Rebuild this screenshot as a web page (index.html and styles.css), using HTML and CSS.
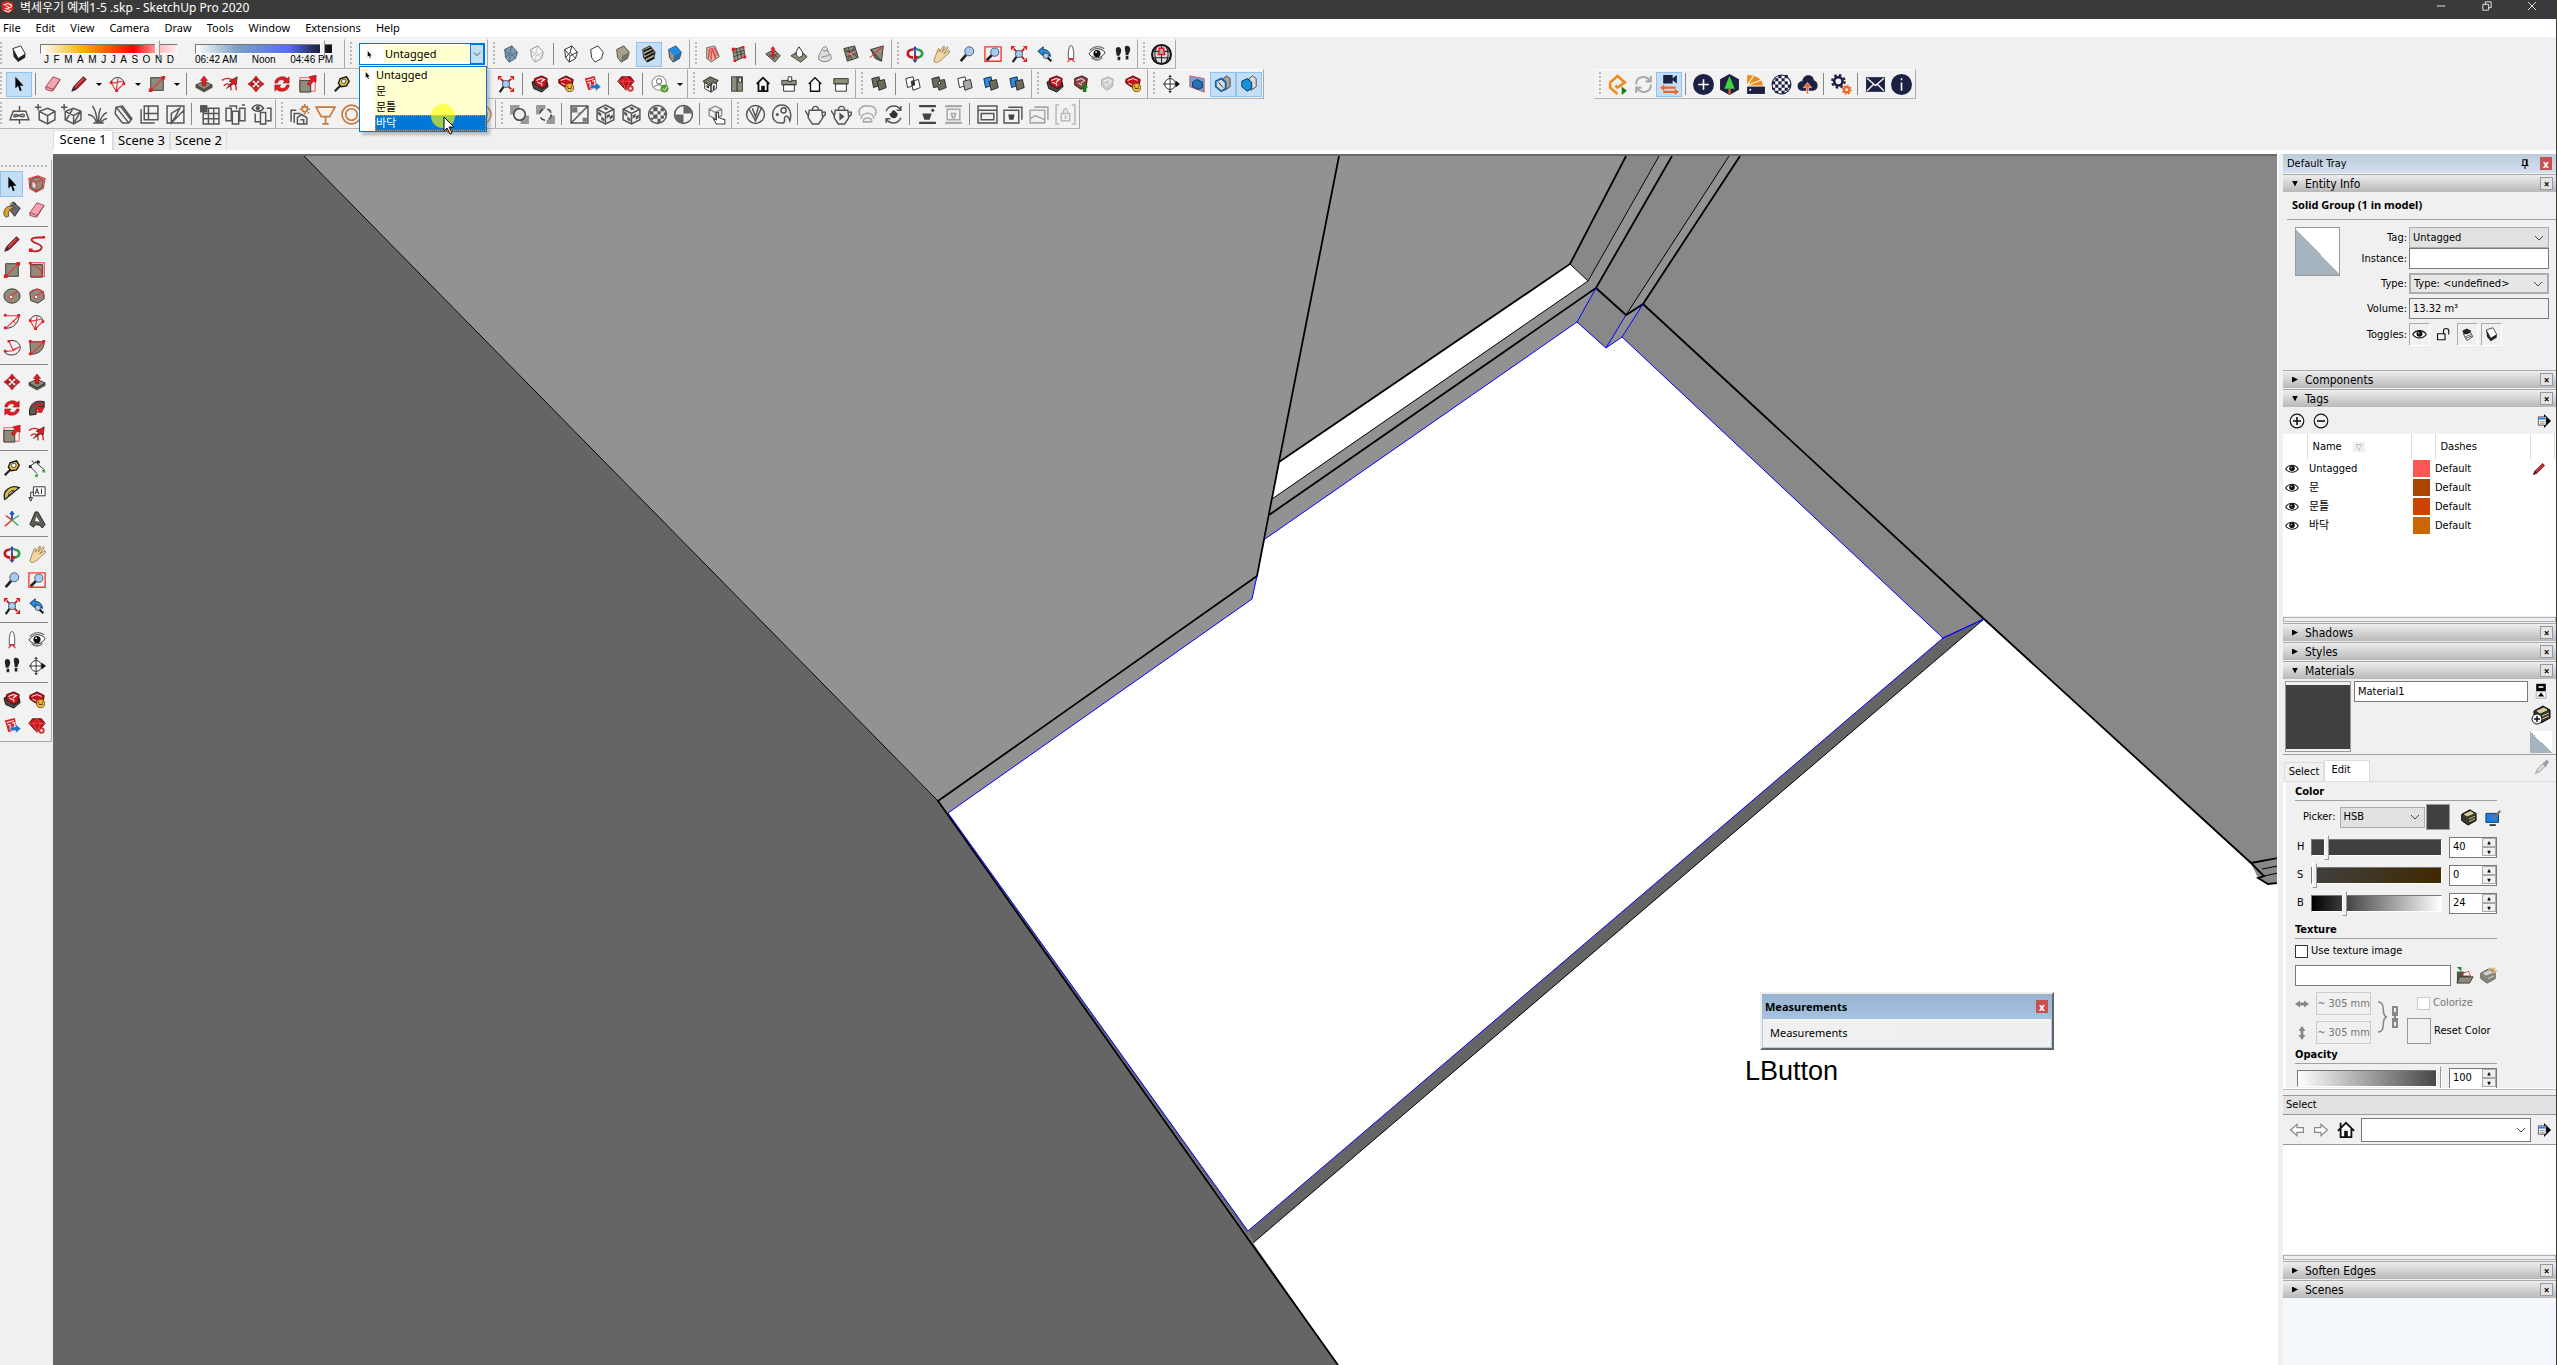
FILE: index.html
```html
<!DOCTYPE html>
<html lang="en">
<head>
<meta charset="utf-8">
<title>벽세우기 예제1-5 .skp - SketchUp Pro 2020</title>
<link rel="stylesheet" href="styles.css">
</head>
<body>
<svg class="defs" aria-hidden="true"><defs>
<symbol id="logo" viewBox="0 0 20 20"><path d="M2 4 11 1l8 4v9l-7 5-9-4z" fill="#e2231a"/><path d="M5 7l6-2 5 2v3l-5 2M8 8l4 2v3l-5-1M6 15l6 2 4-3" fill="none" stroke="#fff" stroke-width="1.5"/></symbol>
<symbol id="shadow" viewBox="0 0 20 20"><path class="w" d="M3 4l9-3 5 9-8 5z"/><path d="M3 4l6 11 8-5v4l-8 5-5-6z" fill="#222"/></symbol>
<symbol id="xray" viewBox="0 0 20 20"><path d="M3 5l8-4 6 7-2 7-7 4-4-5z" fill="#7d9db3" stroke="#3d5668"/><path d="M3 5l6 7 8-4M9 12l-1 7M11 1L9 8l-5 6M9 8l6 7" fill="none" stroke="#3d5668" stroke-width=".7"/></symbol>
<symbol id="backedge" viewBox="0 0 20 20"><path d="M3 5l8-4 6 7-2 7-7 4-4-5z" fill="#f8f8f8" stroke="#888"/><path d="M3 5l6 7 8-4M9 12l-1 7M11 1L9 8l-5 6M9 8l6 7" fill="none" stroke="#bbb"/></symbol>
<symbol id="wire" viewBox="0 0 20 20"><path class="w" d="M3 5l8-4 6 7-2 7-7 4-4-5z"/><path class="l" d="M3 5l6 7 8-4M9 12l-1 7M11 1L9 8l-5 6M9 8l6 7"/></symbol>
<symbol id="hidden" viewBox="0 0 20 20"><path class="w" d="M3 5l8-4 6 7-2 7-7 4-4-5z"/></symbol>
<symbol id="shaded" viewBox="0 0 20 20"><path d="M3 5l8-4 6 7-2 7-7 4-4-5z" fill="#a5a28c" stroke="#444"/><path d="M9 12l8-4-2 7-7 4z" fill="#77745f"/></symbol>
<symbol id="texture" viewBox="0 0 20 20"><path d="M3 5l8-4 6 7-2 7-7 4-4-5z" fill="#a5a28c" stroke="#222"/><path d="M4 7l9-4M5 11l10-5M5 15l11-6M8 18l8-4" stroke="#111" stroke-width="2"/></symbol>
<symbol id="mono" viewBox="0 0 20 20"><path d="M3 5l8-4 6 7-2 7-7 4-4-5z" fill="#97947f" stroke="#333"/><path d="M3 5l8-4 6 7-8 4z" fill="#1c8be0"/><path d="M9 12l8-4-2 7-7 4z" fill="#2d6a9e"/></symbol>
<symbol id="contour" viewBox="0 0 20 20"><path d="M3 3l9-2 5 12-9 6-5-4z" fill="#d8b8a4" stroke="#666"/><path class="r" d="M5 15l1-10 3-1 4 9M8 17L8 7l2 0 3 8M11 3l5 9"/></symbol>
<symbol id="scratch" viewBox="0 0 20 20"><path d="M3 5l12-3 2 11-12 5z" fill="#9a9783" stroke="#444"/><path class="l" d="M4 9l12-3M4 13l12-4M7 4l2 13M11 3l2 12" stroke-width=".7"/><path d="M2 3h4v4H2zM13 1h3v3h-3zM15 12h3v3h-3zM4 16h3v3H4z" fill="#e31b23"/></symbol>
<symbol id="smoove" viewBox="0 0 20 20"><path class="g" d="M2 10l9-5 7 7-6 7z"/><path class="l" d="M5 10l7 6M8 8l7 6M12 7l-5 6M15 9l-5 6" stroke-width=".7"/><path d="M10 1l3 4h-2v5h2l-3 4-3-4h2V5H7z" fill="#e31b23"/></symbol>
<symbol id="stamp" viewBox="0 0 20 20"><path class="g" d="M1 12l10-6 8 7-7 6z"/><path class="w" d="M7 11V7l3-5 4 6v4l-4 2z"/></symbol>
<symbol id="drape" viewBox="0 0 20 20"><path d="M3 16c0-7 2-7 3-10 2-6 7-5 7 0 0 3 4 4 4 8 0 5-11 6-14 2z" fill="#ddd" stroke="#777"/><path d="M6 14c4-3 7 0 9-4M8 6c3 2 3-1 5 1" stroke="#777" fill="none"/></symbol>
<symbol id="detail" viewBox="0 0 20 20"><path class="g" d="M2 4l12-3 4 13-12 4z"/><path class="l" d="M4 8l11-3M5 13l12-4M7 3l4 14M14 2L6 17M3 5l14 8" stroke-width=".7"/><circle cx="10" cy="10" r="2" fill="#f77"/></symbol>
<symbol id="flip" viewBox="0 0 20 20"><path class="g" d="M3 5l14-4-2 17z"/><path d="M3 5l5 10 7 3z" fill="#6c6a58" stroke="#333"/><path class="r" d="M2 14L17 1"/></symbol>
<symbol id="orbit" viewBox="0 0 20 20"><path d="M10 1l3 4h-2v11h2l-3 4-3-4h2V5H7z" fill="#1b4cb0"/><path d="M8 5C0 5 0 14 8 14" fill="none" stroke="#c01820" stroke-width="3"/><path d="M12 5c8 0 8 9 0 9" fill="none" stroke="#2d9a4d" stroke-width="3"/><path d="M9 10l5 4-5 4z" fill="#c01820"/></symbol>
<symbol id="pan" viewBox="0 0 20 20"><path d="M2 18l3-9 2-5 2 1-1 3 5-7 1 1-3 6 6-6 1 1-5 7 6-4 1 2-7 6c-3 4-6 4-8 6z" fill="#f2d7a4" stroke="#8a6a3a" stroke-width=".8"/></symbol>
<symbol id="zoom" viewBox="0 0 20 20"><path d="M9 11l-6 7" stroke="#222" stroke-width="3"/><circle cx="12.500" cy="7" r="5" fill="#a6cdf0" stroke="#456"/></symbol>
<symbol id="zoomwin" viewBox="0 0 20 20"><path d="M1 2h18v16H1z" fill="none" stroke="#f33" stroke-width="1.500"/><path d="M9 11l-6 6" stroke="#222" stroke-width="3"/><circle cx="12" cy="8" r="4.500" fill="#a6cdf0" stroke="#456"/></symbol>
<symbol id="extents" viewBox="0 0 20 20"><path d="M8 12l-5 7" stroke="#222" stroke-width="2.500"/><path d="M4 4l12 12M16 4l-4 4" stroke="#c01820" stroke-width="2"/><path d="M1 1h5L1 6zM19 1v5l-5-5zM19 19h-5l5-5z" fill="#e31b23"/><circle cx="10" cy="10" r="4" fill="#a6cdf0" stroke="#456"/></symbol>
<symbol id="previous" viewBox="0 0 20 20"><path d="M2 7l6-5v3c5 0 8 3 8 8-2-3-4-4-8-4v3z" fill="#2a8be2" stroke="#134"/><circle cx="11" cy="12" r="3" fill="#a6cdf0" stroke="#456"/><path d="M13 14l4 4" stroke="#222" stroke-width="2.500"/></symbol>
<symbol id="camera" viewBox="0 0 20 20"><path class="w" d="M8 3c0-3 4-3 4 0l1 5v7H7V8z" stroke-width=".8"/><path class="r" d="M6 19l4-4 4 4M7 16h6"/></symbol>
<symbol id="look" viewBox="0 0 20 20"><path d="M1 10c5-7 12-8 18-2-3 7-12 9-18 2z" fill="#fff" stroke="#222"/><circle cx="10" cy="9.500" r="4" fill="#111"/><circle cx="9" cy="8" r="1" fill="#fff"/><path d="M2 6c5-5 11-5 16-2M4 14c5 4 9 3 12 0" fill="none" stroke="#777" stroke-width="1.500"/></symbol>
<symbol id="walk" viewBox="0 0 20 20"><path d="M2 5c0-4 6-4 6 1 0 3-1 3-2 6H3c0-3-1-4-1-7zM4 13h3v4H4zM12 3c0-3 6-3 6 2 0 3-2 4-2 6h-3c0-3-1-5-1-8zM13 12h3v4h-3z" fill="#222"/></symbol>
<symbol id="globe" viewBox="0 0 20 20"><circle cx="10" cy="10" r="9" fill="#ddd" stroke="#111" stroke-width="2"/><path class="l" d="M2 7h16M2 13h16M10 1v18M6 2c-3 5-3 11 0 16M14 2c3 5 3 11 0 16"/><path d="M8 4h4l1 6H7z" fill="#aaa" stroke="#e31b23" stroke-width="1.500"/></symbol>
<symbol id="select" viewBox="0 0 20 20"><path d="M6 2v13l3-3 2 6 2-1-2-5h4z" fill="#000"/></symbol>
<symbol id="eraser" viewBox="0 0 20 20"><path d="M2 13l8-11 8 3-7 11-2 2-7-2z" fill="#f4a3b5" stroke="#944"/><path d="M2 13l8 3 8-11M10 16v2" fill="none" stroke="#944"/></symbol>
<symbol id="pencil" viewBox="0 0 20 20"><path d="M2 18l2-5L15 2l3 3L7 16z" fill="#b8232c" stroke="#411"/><path d="M2 18l2-5 3 3z" fill="#333"/><path d="M6 13l9-9" stroke="#e77"/></symbol>
<symbol id="arc" viewBox="0 0 20 20"><path class="l" d="M2 8C6 0 15 2 17 9"/><path class="r" d="M2 8l6 10 9-9M8 18l2-14M4 9l11-2"/><path class="rf" d="M1 7h3v3H1zM7 16h3v3H7zM15 8h3v3h-3z"/></symbol>
<symbol id="rect" viewBox="0 0 20 20"><path class="g" d="M3 3h14v14H3z"/><path class="r" d="M3 17L17 3"/><path class="rf" d="M1 15h4v4H1zM15 1h4v4h-4z"/></symbol>
<symbol id="rectrot" viewBox="0 0 20 20"><path class="g" d="M3 4h13v14H3z"/><path class="r" d="M2 2h16v16M3 5c7-1 12 4 13 12M3 17h14"/><path class="rf" d="M1 1h3v3H1z"/></symbol>
<symbol id="circle" viewBox="0 0 20 20"><ellipse class="g" cx="10" cy="10" rx="9" ry="8"/><path class="r" d="M9 10l7-5"/><circle cx="9" cy="11" r="2" fill="#fff" stroke="#e31b23"/></symbol>
<symbol id="polygon" viewBox="0 0 20 20"><path class="g" d="M2 6l8-4 7 3 1 8-7 5-8-3z"/><path class="r" d="M2 6c6-6 16-4 16 5M9 10l8-5"/><circle cx="9" cy="11" r="2" fill="#fff" stroke="#e31b23"/></symbol>
<symbol id="arc2" viewBox="0 0 20 20"><path class="l" d="M3 17C12 17 17 11 18 3"/><path class="r" d="M2 3h16L3 17M11 8l3 4"/><path class="rf" d="M1 1h3v3H1zM16 1h3v3h-3zM1 15h3v3H1z"/></symbol>
<symbol id="arc3" viewBox="0 0 20 20"><path class="l" d="M7 2c8-2 13 4 12 9-2 7-12 9-17 4"/><path class="r" d="M7 3l4 9 7-3-7 4-9 1"/><path class="rf" d="M5 1h3v3H5zM1 12h3v3H1z"/></symbol>
<symbol id="pie" viewBox="0 0 20 20"><path class="g" d="M2 3h16c0 8-5 14-15 14z"/><path class="r" d="M2 3h16L3 17"/><path class="rf" d="M1 1h3v3H1zM16 1h3v3h-3zM1 15h3v3H1z"/></symbol>
<symbol id="freehand" viewBox="0 0 20 20"><path d="M3 17c5 3 13 0 12-4S3 9 4 5s12-1 14-3" fill="none" stroke="#c01820" stroke-width="2"/><path class="rf" d="M1 15h4v4H1zM16 1h3v3h-3z"/></symbol>
<symbol id="push" viewBox="0 0 20 20"><path class="g" d="M1 11l9-4 9 4-9 6z"/><path d="M1 11l9 5 9-5v3l-9 5-9-5z" fill="#555445" stroke="#222" stroke-width=".5"/><path d="M10 1l4 5h-2v6H8V6H6z" fill="#e31b23" stroke="#600" stroke-width=".5"/></symbol>
<symbol id="offset" viewBox="0 0 20 20"><path d="M1 6C8 1 17 5 17 17M3 12c4-4 9-2 8 5" fill="none" stroke="#d22" stroke-width="1.500"/><path d="M6 15l6-7-3-1 9-5-1 9-3-1z" fill="#e31b23" stroke="#222" stroke-width=".7"/></symbol>
<symbol id="move" viewBox="0 0 20 20"><path d="M10 1l4 5H6zM10 19l4-5H6zM1 10l5-4v8zM19 10l-5-4v8zM9 5h2v3H9zM9 12h2v3H9zM5 9h3v2H5zM12 9h3v2h-3z" fill="#e31b23" stroke="#700" stroke-width=".5"/></symbol>
<symbol id="rotate" viewBox="0 0 20 20"><path d="M2 9c0-7 10-9 14-5l2-2v7h-7l2-2c-3-3-7-2-8 2zM18 11c0 7-10 9-14 5l-2 2v-7h7l-2 2c3 3 7 2 8-2z" fill="#e31b23" stroke="#700" stroke-width=".5"/></symbol>
<symbol id="scale" viewBox="0 0 20 20"><path d="M1 3h17v15H1z" fill="none" stroke="#f44"/><path class="g" d="M1 6h12v13H1z"/><path d="M9 10l4-5-2-3 8-2v8l-3-1-4 5z" fill="#e31b23" stroke="#700" stroke-width=".5"/></symbol>
<symbol id="follow" viewBox="0 0 20 20"><path d="M2 18C0 8 6 0 18 3v6C10 7 9 10 9 17z" fill="#5d5b4d" stroke="#111"/><path d="M5 9c3-4 8-5 12-3M7 14h5l-2-4 8-1-3 6z" stroke="#c01820" fill="#e31b23"/></symbol>
<symbol id="tape" viewBox="0 0 20 20"><path d="M8 4l7-2 3 5-3 5-6 1-3-4z" fill="#e9c93b" stroke="#111" stroke-width="1.500"/><circle cx="12" cy="7" r="2.500" fill="#fff" stroke="#333"/><path d="M8 12l-6 6" stroke="#222" stroke-width="2.500"/></symbol>
<symbol id="dim" viewBox="0 0 20 20"><path class="l" d="M2 8l9-6M2 8l8 8M8 3l10 9M4 2l3 2"/><path d="M8 17h3v3H8zM16 12h3v3h-3z" fill="#3a3"/><path d="M1 7h3v3H1zM10 2h3v3h-3z" fill="#222"/></symbol>
<symbol id="protractor" viewBox="0 0 20 20"><path d="M2 16C-1 7 8-1 18 3z" fill="#d9c04a" stroke="#222" stroke-width="1.500"/><path d="M6 12c0-4 3-6 6-6z" fill="#fff" stroke="#222"/></symbol>
<symbol id="text" viewBox="0 0 20 20"><path class="w" d="M6 2h13v10H6zM6 8H3v7M1 14l2 4 2-4z"/><path class="l" d="M8 10l2-6 2 6M9 8h2M15 4v6"/></symbol>
<symbol id="axes" viewBox="0 0 20 20"><path d="M10 10V1M8 4l2-3 2 3" stroke="#25c" fill="none" stroke-width="2"/><path d="M10 10l8-5M10 10l7 6" stroke="#3a5" stroke-width="1.500"/><path d="M10 10l-8 7M10 10L3 5" stroke="#d22" stroke-width="1.500"/></symbol>
<symbol id="text3d" viewBox="0 0 20 20"><path d="M2 15L8 1h3l8 14-3 4-3-3-4-1-3 3z" fill="#5f5d50" stroke="#222"/><path d="M8 11l1-5 4 6z" fill="#fff"/></symbol>
<symbol id="bucket" viewBox="0 0 20 20"><path d="M6 8l6-6 7 6-6 9z" fill="#667" stroke="#222"/><path d="M1 13c1-8 8-9 12-5-6 0-7 3-7 9-3 2-5 0-5-4z" fill="#d9a429" stroke="#543"/><path d="M8 4c2-4 6-3 6 0" fill="none" stroke="#222"/></symbol>
<symbol id="component" viewBox="0 0 20 20"><path class="g" d="M3 5l7-3 7 3-1 9-7 4-6-4z"/><path d="M5 8l4 2v5l-4-2z" fill="#ddd"/><path class="r" d="M1 4l10-3 8 3-2 11-8 4-7-4zM1 4l8 4 10-4M9 8v11"/></symbol>
<symbol id="warehouse" viewBox="0 0 20 20"><path d="M1 8l3-2 9 9 5-7 1 5-7 6-9-4z" fill="#4a4a42" stroke="#111"/><path d="M4 4l8-3 6 3-1 8-5 3-8-5z" fill="#c4161c" stroke="#400"/><path d="M6 6l5-2 4 1-4 3M7 8l5 2v2" fill="none" stroke="#fff" stroke-width="1.200"/></symbol>
<symbol id="extwh" viewBox="0 0 20 20"><path d="M2 5l8-4 8 4-1 6-6 4-9-6z" fill="#c4161c" stroke="#400"/><path d="M4 6l6-2 5 2M5 9l4 2" fill="none" stroke="#fff"/><circle cx="14" cy="14" r="4.500" fill="#f5b91e" stroke="#653"/><path d="M12 15h4M12 12v2M16 12v2" stroke="#333"/></symbol>
<symbol id="layout" viewBox="0 0 20 20"><path d="M2 4l11-3 3 13-10 3z" fill="#e31b23"/><path d="M4 6l8-2M5 9l3-1v6M10 7l3-1v6" fill="none" stroke="#fff" stroke-width="1.200"/><path d="M8 11h6V8l6 5-6 5v-3H8z" fill="#1c73c7" stroke="#fff" stroke-width=".5"/></symbol>
<symbol id="ruby" viewBox="0 0 20 20"><path d="M1 7l4-5h10l4 5-9 10z" fill="#c4161c" stroke="#500"/><path d="M1 7h18M6 7l4 10 4-10-4-5z" fill="none" stroke="#f66" stroke-width=".7"/><circle cx="15" cy="15" r="2.500" fill="#fff" stroke="#c33" stroke-width="2"/></symbol>
<symbol id="user" viewBox="0 0 20 20"><circle cx="9" cy="9" r="8" fill="#fff" stroke="#777"/><circle cx="9" cy="7" r="3" fill="none" stroke="#555"/><path d="M3 14c2-4 10-4 12 0" fill="none" stroke="#555"/><circle cx="15" cy="15" r="4.500" fill="#5a9e32"/><path d="M13 15l2 2 3-4" fill="none" stroke="#fff"/></symbol>
<symbol id="iso" viewBox="0 0 20 20"><path class="w" d="M3 8l7 3v8l-7-4zM10 11l6-4v8l-6 4z"/><path d="M1 7l8-5 9 4-3 4-3-3-3 5z" fill="#77745f" stroke="#222"/><path d="M5 11l3 1v3l-3-1zM12 12l2-1v5l-2 1z" fill="#333"/></symbol>
<symbol id="top" viewBox="0 0 20 20"><path class="g" d="M4 2h12v16H4z"/><path class="l" d="M10 2v16"/><path class="w" d="M12 3h3v5h-3z"/></symbol>
<symbol id="front" viewBox="0 0 20 20"><path d="M3 10l7-7 7 7M5 9v9h10V9" fill="#fff" stroke="#111" stroke-width="2"/><path d="M8 12h4v6H8z" fill="#111"/></symbol>
<symbol id="right" viewBox="0 0 20 20"><path class="g" d="M2 6h16v5H2z"/><path class="w" d="M4 11h12v7H4zM9 2h4v5H9z"/></symbol>
<symbol id="back" viewBox="0 0 20 20"><path d="M3 10l7-7 7 7M5 9v9h10V9" fill="#fff" stroke="#111" stroke-width="1.500"/></symbol>
<symbol id="left" viewBox="0 0 20 20"><path class="g" d="M2 4h16v6H2z"/><path class="w" d="M4 10h12v8H4z"/></symbol>
<symbol id="solid" viewBox="0 0 20 20"><path class="gd" d="M2 4l8-2 2 9-8 3z"/><path class="gd" d="M8 7l8-2 2 9-8 3z"/></symbol>
<symbol id="intersect" viewBox="0 0 20 20"><path class="w" d="M2 4l8-2 2 9-8 3zM8 7l8-2 2 9-8 3z"/><path d="M8 7l3-1 1 5-3 1z" fill="#333"/></symbol>
<symbol id="union" viewBox="0 0 20 20"><path class="gd" d="M2 4l8-2 1 4 5-1 2 9-8 3-1-4-5 1z"/><path class="w" d="M9 8l2-1 1 3-2 1z"/></symbol>
<symbol id="subtract" viewBox="0 0 20 20"><path class="w" d="M2 4l8-2 2 9-8 3z"/><path d="M8 7l8-2 2 9-8 3z" fill="#aaa" stroke="#222"/></symbol>
<symbol id="trim" viewBox="0 0 20 20"><path d="M2 4l8-2 2 9-8 3z" fill="#2a8be2" stroke="#123"/><path class="gd" d="M8 7l8-2 2 9-8 3z"/></symbol>
<symbol id="share" viewBox="0 0 20 20"><path d="M3 4l8-3 6 3-1 8-6 4-7-5z" fill="#844" stroke="#400"/><path d="M5 6l5-2 4 2-4 3M7 9l4 2" fill="none" stroke="#fff"/><path d="M14 9l4 5h-2v5h-4v-5h-2z" fill="#167d1a"/></symbol>
<symbol id="sharegray" viewBox="0 0 20 20"><path d="M4 5l8-3 5 3-1 8-6 4-6-5z" fill="#ccc" stroke="#aaa"/><path d="M6 7l5-2 4 2-4 3M7 10l4 2" fill="none" stroke="#fff"/></symbol>
<symbol id="section" viewBox="0 0 20 20"><circle cx="9" cy="10" r="6" fill="#fff" stroke="#222"/><path class="l" d="M1 10h17M9 1v18"/><path d="M15 6l5 4-5 4zM7 2l2-2 2 2zM7 18l2 2 2-2z" fill="#111"/></symbol>
<symbol id="secplane" viewBox="0 0 20 20"><path d="M2 1l16 3v15L2 13z" fill="#67a5dc" stroke="#e05060"/><path d="M5 8l5-3 6 3v6l-5 2-6-3z" fill="#2a70b5" stroke="#135"/></symbol>
<symbol id="seccut" viewBox="0 0 20 20"><path d="M10 4l4-3 4 3v9l-6 4z" fill="#aaa49a" stroke="#444"/><path d="M2 7l6-3 5 4v7l-5 3-6-5z" fill="#ddd" stroke="#1060a8" stroke-width="2"/><path class="l" d="M5 8l5 6"/></symbol>
<symbol id="secfill" viewBox="0 0 20 20"><path d="M10 4l4-3 4 3v9l-6 4z" fill="#ddd" stroke="#444"/><path d="M2 7l6-3 5 4v7l-5 3-6-5z" fill="#1593dc" stroke="#124"/></symbol>
<symbol id="e-start" viewBox="0 0 20 20"><path d="M3 8l7-6 7 6-7 5-2-2M3 8v5l7 6" fill="none" stroke="#f08a1d" stroke-width="2.500"/><path d="M14 12l5 4-5 4z" fill="#137d13"/></symbol>
<symbol id="e-sync" viewBox="0 0 20 20"><path d="M3 10c0-8 9-9 13-4M17 10c0 8-9 9-13 4M17 2v5h-5M3 18v-5h5" fill="none" stroke="#aaa" stroke-width="2"/></symbol>
<symbol id="e-cam" viewBox="0 0 20 20"><path d="M4 1h9v8H4zM13 4l4-3v8l-4-3z" fill="#1c2043"/><path d="M1 13l4-3v2h11v2H5v2zM19 17l-4-3v2H4v2h11v2z" fill="#f26522"/></symbol>
<symbol id="e-add" viewBox="0 0 20 20"><circle cx="10" cy="10" r="10" fill="#1c2043"/><path d="M5 10h10M10 5v10" stroke="#fff" stroke-width="1.500"/></symbol>
<symbol id="e-tree" viewBox="0 0 20 20"><path d="M10 0l9 5v10l-9 5-9-5V5z" fill="#1c2043"/><path d="M10 2l5 12H5z" fill="#3ad63a"/><path d="M9 14h2v5H9z" fill="#f26522"/></symbol>
<symbol id="e-mat" viewBox="0 0 20 20"><path d="M2 1c9 0 15 4 15 10H2z" fill="#f08a1d"/><path d="M2 11L8 2M2 11l13-5" stroke="#fff"/><path d="M2 12h17v7H2z" fill="#1c2043"/><circle cx="5" cy="15" r="1" fill="#fff"/></symbol>
<symbol id="e-check" viewBox="0 0 20 20"><circle cx="10" cy="10" r="9" fill="#fff" stroke="#1c2043"/><path d="M4 4h3v3H4zM10 4h3v3h-3zM7 1h3v3H7zM13 1h3v3h-3zM1 7h3v3H1zM7 7h3v3H7zM13 7h3v3h-3zM4 10h3v3H4zM10 10h3v3h-3zM16 10h3v3h-3zM1 13h3v2H1zM7 13h3v3H7zM13 13h3v3h-3zM4 16h3v2H4zM10 16h3v3h-3z" fill="#1c2043"/></symbol>
<symbol id="e-cloud" viewBox="0 0 20 20"><path d="M4 16C-2 14 1 6 5 7c1-8 11-7 11-1 5 1 5 10-1 10z" fill="#1c2043"/><path d="M10 8l4 5h-3v6H9v-6H6z" fill="#f26522" stroke="#fff" stroke-width=".5"/></symbol>
<symbol id="e-gear" viewBox="0 0 20 20"><circle cx="7" cy="7" r="4" fill="none" stroke="#1c2043" stroke-width="2.500"/><circle cx="7" cy="7" r="6" fill="none" stroke="#1c2043" stroke-width="2" stroke-dasharray="2.400 2.300"/><circle cx="15" cy="15" r="2.500" fill="none" stroke="#f26522" stroke-width="2"/><circle cx="15" cy="15" r="4" fill="none" stroke="#f26522" stroke-width="1.500" stroke-dasharray="1.600 1.500"/></symbol>
<symbol id="e-mail" viewBox="0 0 20 20"><path d="M1 3h18v14H1z" fill="#1c2043"/><path d="M2 4l8 7 8-7M2 16l6-6M18 16l-6-6" fill="none" stroke="#fff" stroke-width="1.200"/></symbol>
<symbol id="e-info" viewBox="0 0 20 20"><circle cx="10" cy="10" r="10" fill="#1c2043"/><path d="M10 8v8M10 4v2" stroke="#fff" stroke-width="1.500"/></symbol>
<symbol id="v-plane" viewBox="0 0 20 20"><path class="v" d="M4 7h12l3 8H1zM10 2v5M10 15v4M7 10c-3 0-3 3 0 2l5-2c4-1 3 3 0 2z"/></symbol>
<symbol id="v-cube" viewBox="0 0 20 20"><path class="v" d="M4 7l8-3 7 3v8l-7 4-8-4zM4 7l8 4 7-4M12 11v8M0 3h6M3 0v6"/></symbol>
<symbol id="v-cubex" viewBox="0 0 20 20"><path class="v" d="M4 7l8-3 7 3v8l-7 4-8-4zM4 7l8 4 7-4M12 11v8M5 15l6-10M13 17l5-9M0 3h6M3 0v6"/></symbol>
<symbol id="v-fur" viewBox="0 0 20 20"><path class="v" d="M9 18C8 13 6 11 1 10M10 18C9 9 8 5 5 2M11 18c0-7 0-10 2-14M12 18c1-5 3-8 7-10M6 18h10M13 18c2-3 3-4 6-4"/></symbol>
<symbol id="v-clip" viewBox="0 0 20 20"><path class="v" d="M3 3l6-1 9 12-3 4-6 0L2 9zM3 3l12 15M7 2l10 13M2 9l1-6"/></symbol>
<symbol id="v-decal" viewBox="0 0 20 20"><path class="v" d="M5 2h13v13H5zM2 5v13h13M9 2v13M5 9h13"/></symbol>
<symbol id="v-page" viewBox="0 0 20 20"><path class="v" d="M2 2h16v16H2zM6 18V9l8-5-4 8zM6 18l12-12"/></symbol>
<symbol id="v-grid" viewBox="0 0 20 20"><path class="v" d="M4 4h15v15H4zM9 4v15M14 4v15M4 9h15M4 14h15"/><path d="M1 1h7v7H1z" fill="#555"/></symbol>
<symbol id="v-multi" viewBox="0 0 20 20"><path class="v" d="M1 4h5v12H1zM7 7h6v12H7zM14 4h5v12h-5zM4 2h7v3M16 1h3"/></symbol>
<symbol id="v-eye" viewBox="0 0 20 20"><path class="v" d="M1 4c3-4 8-4 11 0-3 4-8 4-11 0zM4 9v8h5M9 8h5v11H9zM15 4h4v12h-4"/><circle cx="6.500" cy="4" r="2" fill="#555"/></symbol>
<symbol id="v-light" viewBox="0 0 20 20"><path class="v" d="M2 17V6h5M5 18V9h6M8 19v-6l4-3 5 3v6zM11 15h3v4"/><circle class="o" cx="15" cy="5" r="2.500"/><path class="o" d="M15 0v2M15 8v2M10 5h2M18 5h2M12 2l1 1M18 8l1 1M18 2l-1 1"/></symbol>
<symbol id="o-spot" viewBox="0 0 20 20"><path class="o" d="M1 3h18l-5 9H6zM10 12v7M7 19h6"/></symbol>
<symbol id="o-ring" viewBox="0 0 20 20"><circle class="o" cx="10" cy="10" r="9"/><circle class="o" cx="10" cy="10" r="5.500"/></symbol>
<symbol id="v-bool" viewBox="0 0 20 20"><path d="M1 1h9v9H1zM11 11h8v8h-8z" fill="#999"/><circle cx="10" cy="10" r="5.500" fill="#eee" stroke="#444" stroke-width="1.500"/></symbol>
<symbol id="v-boold" viewBox="0 0 20 20"><path d="M1 1h9v9H1zM11 11h8v8h-8z" fill="#999"/><circle cx="10" cy="10" r="5.500" fill="#eee" stroke="#444" stroke-width="1.500" stroke-dasharray="5 4"/></symbol>
<symbol id="v-uv" viewBox="0 0 20 20"><path class="v" d="M2 2h16v16H2zM2 18L18 2"/><path d="M3 3h5v5H3zM9 8h4l-4 4zM13 13h4v4h-4z" fill="#777"/></symbol>
<symbol id="v-cubec" viewBox="0 0 20 20"><path class="v" d="M2 5l8-4 8 4v10l-8 4-8-4zM2 5l8 4 8-4M10 9v10"/><path d="M3 7l3 2v3l-3-2zM6 12l3 2v3l-3-2zM11 11l3-2v3l-3 2zM14 12l3-2v3l-3 2zM8 3l3 0 2 2-3 1z" fill="#555"/></symbol>
<symbol id="v-ball" viewBox="0 0 20 20"><circle class="v" cx="10" cy="10" r="8.500"/><path d="M6 3h4v4H6zM13 4h3v3h-3zM3 7h3v3H3zM10 7h3v3h-3zM16 8h2v3h-2zM6 10h4v4H6zM13 11h3v3h-3zM10 14h3v4h-3zM3 13h3v2H4z" fill="#555"/></symbol>
<symbol id="v-ball2" viewBox="0 0 20 20"><circle class="v" cx="10" cy="10" r="8.500"/><path d="M10 2v7h8c0-4-4-7-8-7zM2 10h8v8c-5 0-8-4-8-8z" fill="#666"/></symbol>
<symbol id="v-pick" viewBox="0 0 20 20"><path d="M2 5l6-3 6 3v6l-6 3-6-3zM2 5l6 3 6-3M8 8v6" fill="none" stroke="#888" stroke-width="1.200"/><path d="M9 19l-3-5 3 1V8h2v5l6 2v4z" fill="#fff" stroke="#444"/></symbol>
<symbol id="v-ray" viewBox="0 0 20 20"><circle class="v" cx="10" cy="10" r="8.500"/><path class="v" d="M4 5l6 11 6-13M7 4l3 8 3-10"/></symbol>
<symbol id="v-palette" viewBox="0 0 20 20"><path class="v" d="M11 18C-2 20-1 1 10 1c8 0 10 8 8 15-2-7-6-4-5-1 0 2-1 3-2 3z"/><circle class="v" cx="12" cy="6" r="2.500"/><circle cx="6" cy="10" r="1.500" fill="#555"/></symbol>
<symbol id="v-pot" viewBox="0 0 20 20"><path class="v" d="M4 6h12l1 7-4 6H7l-4-6zM7 6c0-5 6-5 6 0M3 11L0 6M17 8c4-2 3 4-1 4"/></symbol>
<symbol id="v-potp" viewBox="0 0 20 20"><path class="v" d="M4 6h12l1 7-4 6H7l-4-6zM7 6c0-5 6-5 6 0M3 11L0 6M17 8c4-2 3 4-1 4"/><path d="M8 8l5 4-5 4z" fill="#555"/></symbol>
<symbol id="v-cloud" viewBox="0 0 20 20"><path d="M3 11C0 5 5 1 10 2c6-1 10 3 7 9M4 14c0-7 12-7 12 0M6 17c-1-5 9-5 8 0z" fill="none" stroke="#aaa" stroke-width="1.500"/></symbol>
<symbol id="v-refresh" viewBox="0 0 20 20"><path class="v" d="M3 7c2-6 11-7 14-1M17 13c-2 6-11 7-14 1M17 2v4h-4M3 18v-4h4"/><path d="M6 9c3 0 2-3 4-3s2 2 4 3c0 6-7 6-8 0z" fill="#333"/></symbol>
<symbol id="v-stand" viewBox="0 0 20 20"><path d="M2 1h16v2H2zM2 17h16v2H2zM5 9h9l-2 6H7zM2 8l4 4z" fill="#444"/><circle cx="15" cy="6" r="1.500" fill="#444"/></symbol>
<symbol id="v-standg" viewBox="0 0 20 20"><path d="M2 1h16v2H2zM2 17h16v2H2z" fill="#aaa"/><path d="M4 5h12v10H4zM8 9h4l-1 4H9z" fill="none" stroke="#aaa" stroke-width="1.500"/></symbol>
<symbol id="v-window" viewBox="0 0 20 20"><path class="v" d="M1 2h18v16H1zM1 6h18M4 9h12v6H4z"/></symbol>
<symbol id="v-winpot" viewBox="0 0 20 20"><path class="v" d="M1 6h14v12H1zM5 3h13v12"/><path d="M5 10h6l-1 5H6z" fill="#444"/></symbol>
<symbol id="v-wing" viewBox="0 0 20 20"><path d="M1 6h14v12H1zM5 3h13v12M1 14l5-3 9 4" fill="none" stroke="#aaa" stroke-width="1.500"/></symbol>
<symbol id="v-lock" viewBox="0 0 20 20"><path d="M4 1H1v18h3M16 1h3v18h-3M6 9h8v7H6zM8 9c0-6 4-6 4 0M10 11v3" fill="none" stroke="#bbb" stroke-width="1.500"/></symbol>
<symbol id="eye" viewBox="0 0 20 20"><path d="M1 10c4-7 14-7 18 0-4 6-14 6-18 0z" fill="#fff" stroke="#111" stroke-width="1.500"/><circle cx="10" cy="9" r="4" fill="#111"/><circle cx="9" cy="8" r="1" fill="#fff"/></symbol>
<symbol id="unlock" viewBox="0 0 20 20"><path d="M2 9h10v8H2zM10 9V5c0-4 7-4 7 0v5" fill="none" stroke="#111" stroke-width="1.500"/></symbol>
<symbol id="recv" viewBox="0 0 20 20"><path class="w" d="M4 8l9-3 4 8-8 5z"/><path d="M3 5l6-3 6 3-3 4-6 1z" fill="#222"/><path class="l" d="M7 13l8-3M8 15l8-3"/></symbol>
<symbol id="plus" viewBox="0 0 20 20"><circle cx="10" cy="10" r="8.500" fill="none" stroke="#111" stroke-width="1.500"/><path d="M5 10h10M10 5v10" stroke="#111" stroke-width="2"/></symbol>
<symbol id="minus" viewBox="0 0 20 20"><circle cx="10" cy="10" r="8.500" fill="none" stroke="#111" stroke-width="1.500"/><path d="M5 10h10" stroke="#111" stroke-width="2"/></symbol>
<symbol id="details" viewBox="0 0 20 20"><path d="M10 0l10 10-10 10z" fill="#000"/><path d="M2 4h11v12H2z" fill="#fff" stroke="#222"/><path d="M3 5h9v3H3z" fill="#2a7be2"/><path d="M4 11h7M4 14h7" stroke="#555"/></symbol>
<symbol id="crate" viewBox="0 0 20 20"><path d="M3 7l9-5 7 4v8l-9 5-7-5z" fill="#3a3728" stroke="#000"/><path d="M6 7l7-3 3 2-7 3zM11 12l7-3M11 15l7-3" fill="#d7cf9c" stroke="#d7cf9c"/></symbol>
<symbol id="cratebadge" viewBox="0 0 20 20"><path d="M3 6l9-5 7 4v8l-9 5-7-5z" fill="#3a3728" stroke="#000"/><path d="M6 6l7-3 3 2-7 3zM11 11l7-3M11 14l7-3" fill="#d7cf9c" stroke="#d7cf9c"/><circle cx="6" cy="14" r="5" fill="#fff" stroke="#111"/><path d="M3 14h6M6 11v6" stroke="#111" stroke-width="1.500"/></symbol>
<symbol id="secondary" viewBox="0 0 20 20"><path d="M4 1h12v9H4z" fill="#000"/><path d="M7 5h6" stroke="#fff" stroke-width="2"/><path d="M4 11h12v8H4z" fill="#fff" stroke="#999"/><path d="M6 17l4-5 4 5z" fill="#000"/></symbol>
<symbol id="monitor" viewBox="0 0 20 20"><path d="M1 6h14v10H1z" fill="#1c7fe0" stroke="#135"/><path d="M5 19h7" stroke="#333" stroke-width="2"/><path d="M9 12l8-9" stroke="#777" stroke-width="2.500"/></symbol>
<symbol id="dropper" viewBox="0 0 20 20"><path d="M2 18l2-5 7-7 3 3-7 7z" fill="#ddd" stroke="#888"/><path d="M11 4l2 0 3-3 3 3-3 3v2l-1 1z" fill="#999"/><path d="M2 18l2-4 2 2z" fill="#db9"/></symbol>
<symbol id="folder" viewBox="0 0 20 20"><path d="M1 6h6l8 2v10H1z" fill="#555242"/><path d="M8 8l6-2 2 5H8z" fill="#fff" stroke="#c44"/><path d="M4 12h15l-4 7H1z" fill="#8b8873" stroke="#333"/><path d="M1 1h5v5z" fill="#183"/></symbol>
<symbol id="edittex" viewBox="0 0 20 20"><path d="M2 8l9-5 7 3v8l-9 5-7-5z" fill="#888678" stroke="#555"/><path d="M5 8l7-3 3 2-7 3zM10 14l7-3" fill="#ccc" stroke="#ddd"/><path d="M10 3h7v4l3-2" fill="none" stroke="#e8b878" stroke-width="2"/></symbol>
<symbol id="harrow" viewBox="0 0 20 20"><path d="M0 10l7-5v3h6V5l7 5-7 5v-3H7v3z" fill="#888"/></symbol>
<symbol id="varrow" viewBox="0 0 20 20"><path d="M10 0l5 7h-3v6h3l-5 7-5-7h3V7H5z" fill="#888"/></symbol>
<symbol id="prev" viewBox="0 0 20 20"><path d="M2 10l8-7v4h8v6h-8v4z" fill="#fff" stroke="#888" stroke-width="1.500"/></symbol>
<symbol id="next" viewBox="0 0 20 20"><path d="M18 10l-8-7v4H2v6h8v4z" fill="#fff" stroke="#888" stroke-width="1.500"/></symbol>
<symbol id="home" viewBox="0 0 20 20"><path d="M1 11l9-9 9 9M4 9v9h12V9M4 7V2" fill="#fff" stroke="#111" stroke-width="2"/><path d="M8 11h4v7H8z" fill="#111"/></symbol>
<symbol id="pin" viewBox="0 0 20 20"><path d="M7 4h6v8H7zM5 12h10M10 12v5M12 4v8" fill="none" stroke="#000" stroke-width="1.500"/></symbol>
</defs></svg>

<header class="titlebar">
  <svg class="logo"><use href="#logo"/></svg>
  <span class="caption">벽세우기 예제1-5 .skp - SketchUp Pro 2020</span>
  <button class="winbtn" aria-label="Minimize"><svg viewBox="0 0 12 12"><path d="M1 6h10"/></svg></button>
  <button class="winbtn" aria-label="Restore"><svg viewBox="0 0 12 12"><path d="M1 4h7v7H1zM4 4V1h7v7H8"/></svg></button>
  <button class="winbtn" aria-label="Close"><svg viewBox="0 0 12 12"><path d="M1 1l10 10M11 1L1 11"/></svg></button>
</header>
<nav class="menubar">
  <button>File</button><button>Edit</button><button>View</button><button>Camera</button><button>Draw</button><button>Tools</button><button>Window</button><button>Extensions</button><button>Help</button>
</nav>

<div class="docks">
  <div class="dock">
    <div class="bar first shadows">
      <button class="t"><svg><use href="#shadow"/></svg></button>
      <div class="daterange">
        <input class="range month" type="range" min="0" max="100" value="87" aria-label="Date">
        <div class="ticks"><span>J</span><span>F</span><span>M</span><span>A</span><span>M</span><span>J</span><span>J</span><span>A</span><span>S</span><span>O</span><span>N</span><span>D</span></div>
      </div>
      <div class="daterange">
        <input class="range time" type="range" min="0" max="100" value="95" aria-label="Time">
        <div class="ticks"><span>06:42 AM</span><span>Noon</span><span>04:46 PM</span></div>
      </div>
    </div>
    <div class="bar tagbar">
      <div class="tagcombo">
        <svg class="tiny"><use href="#select"/></svg>
        <input type="text" value="Untagged" aria-label="Tag">
        <button aria-label="Open tag list"><svg viewBox="0 0 10 10"><path d="M1 3l4 4 4-4"/></svg></button>
        <ul class="taglist">
          <li><svg class="tiny"><use href="#select"/></svg><span>Untagged</span></li>
          <li><span>문</span></li>
          <li><span>문틀</span></li>
          <li class="on"><span>바닥</span></li>
        </ul>
        <span class="halo"></span>
        <svg class="pointer" viewBox="0 0 12 19"><path d="M1 1v14l3-3 3 6 2-1-3-6h5z" fill="#fff" stroke="#000"/></svg>
      </div>
    </div>
    <div class="bar">
      <button class="t"><svg><use href="#xray"/></svg></button><button class="t"><svg><use href="#backedge"/></svg></button><i></i><button class="t"><svg><use href="#wire"/></svg></button><button class="t"><svg><use href="#hidden"/></svg></button><button class="t"><svg><use href="#shaded"/></svg></button><button class="t on"><svg><use href="#texture"/></svg></button><button class="t"><svg><use href="#mono"/></svg></button>
    </div>
    <div class="bar">
      <button class="t"><svg><use href="#contour"/></svg></button><button class="t"><svg><use href="#scratch"/></svg></button><i></i><button class="t"><svg><use href="#smoove"/></svg></button><button class="t"><svg><use href="#stamp"/></svg></button><button class="t"><svg><use href="#drape"/></svg></button><button class="t"><svg><use href="#detail"/></svg></button><button class="t"><svg><use href="#flip"/></svg></button>
    </div>
    <div class="bar">
      <button class="t"><svg><use href="#orbit"/></svg></button><button class="t"><svg><use href="#pan"/></svg></button><button class="t"><svg><use href="#zoom"/></svg></button><button class="t"><svg><use href="#zoomwin"/></svg></button><button class="t"><svg><use href="#extents"/></svg></button><button class="t"><svg><use href="#previous"/></svg></button><button class="t"><svg><use href="#camera"/></svg></button><button class="t"><svg><use href="#look"/></svg></button><button class="t"><svg><use href="#walk"/></svg></button>
    </div>
    <div class="bar big"><button class="t"><svg><use href="#globe"/></svg></button></div>
  </div>

  <div class="dock">
    <div class="bar first">
      <button class="t on"><svg><use href="#select"/></svg></button><i></i><button class="t"><svg><use href="#eraser"/></svg></button><button class="t"><svg><use href="#pencil"/></svg></button><button class="more" aria-label="More lines"></button><button class="t"><svg><use href="#arc"/></svg></button><button class="more" aria-label="More arcs"></button><button class="t"><svg><use href="#rect"/></svg></button><button class="more" aria-label="More shapes"></button><i></i><button class="t"><svg><use href="#push"/></svg></button><button class="t"><svg><use href="#offset"/></svg></button><button class="t"><svg><use href="#move"/></svg></button><button class="t"><svg><use href="#rotate"/></svg></button><button class="t"><svg><use href="#scale"/></svg></button><i></i><button class="t"><svg><use href="#tape"/></svg></button><button class="t"><svg><use href="#text"/></svg></button><button class="t"><svg><use href="#bucket"/></svg></button><i></i><button class="t"><svg><use href="#orbit"/></svg></button><button class="t"><svg><use href="#pan"/></svg></button><button class="t"><svg><use href="#zoom"/></svg></button><button class="t"><svg><use href="#extents"/></svg></button><i></i><button class="t"><svg><use href="#warehouse"/></svg></button><button class="t"><svg><use href="#extwh"/></svg></button><button class="t"><svg><use href="#layout"/></svg></button><i></i><button class="t"><svg><use href="#ruby"/></svg></button><i></i><button class="t"><svg><use href="#user"/></svg></button><button class="more" aria-label="Account"></button>
    </div>
    <div class="bar">
      <button class="t"><svg><use href="#iso"/></svg></button><button class="t"><svg><use href="#top"/></svg></button><button class="t"><svg><use href="#front"/></svg></button><button class="t"><svg><use href="#right"/></svg></button><button class="t"><svg><use href="#back"/></svg></button><button class="t"><svg><use href="#left"/></svg></button>
    </div>
    <div class="bar">
      <button class="t"><svg><use href="#solid"/></svg></button><i></i><button class="t"><svg><use href="#intersect"/></svg></button><button class="t"><svg><use href="#union"/></svg></button><button class="t"><svg><use href="#subtract"/></svg></button><button class="t"><svg><use href="#trim"/></svg></button><button class="t"><svg><use href="#trim"/></svg></button>
    </div>
    <div class="bar">
      <button class="t"><svg><use href="#warehouse"/></svg></button><button class="t"><svg><use href="#share"/></svg></button><button class="t"><svg><use href="#sharegray"/></svg></button><button class="t"><svg><use href="#extwh"/></svg></button>
    </div>
    <div class="bar">
      <button class="t"><svg><use href="#section"/></svg></button><button class="t"><svg><use href="#secplane"/></svg></button><button class="t on"><svg><use href="#seccut"/></svg></button><button class="t on"><svg><use href="#secfill"/></svg></button>
    </div>
    <div class="bar big apart">
      <button class="t"><svg><use href="#e-start"/></svg></button><button class="t"><svg><use href="#e-sync"/></svg></button><button class="t on"><svg><use href="#e-cam"/></svg></button><i></i><button class="t"><svg><use href="#e-add"/></svg></button><button class="t"><svg><use href="#e-tree"/></svg></button><button class="t"><svg><use href="#e-mat"/></svg></button><button class="t"><svg><use href="#e-check"/></svg></button><button class="t"><svg><use href="#e-cloud"/></svg></button><i></i><button class="t"><svg><use href="#e-gear"/></svg></button><i></i><button class="t"><svg><use href="#e-mail"/></svg></button><button class="t"><svg><use href="#e-info"/></svg></button>
    </div>
  </div>

  <div class="dock">
    <div class="bar first">
      <button class="t"><svg><use href="#v-plane"/></svg></button><button class="t"><svg><use href="#v-cube"/></svg></button><button class="t"><svg><use href="#v-cubex"/></svg></button><button class="t"><svg><use href="#v-fur"/></svg></button><button class="t"><svg><use href="#v-clip"/></svg></button><button class="t"><svg><use href="#v-decal"/></svg></button><button class="t"><svg><use href="#v-page"/></svg></button><i></i><button class="t"><svg><use href="#v-grid"/></svg></button><button class="t"><svg><use href="#v-multi"/></svg></button><button class="t"><svg><use href="#v-eye"/></svg></button>
    </div>
    <div class="bar">
      <button class="t"><svg><use href="#v-light"/></svg></button><button class="t"><svg><use href="#o-spot"/></svg></button><button class="t"><svg><use href="#o-ring"/></svg></button><button class="t"><svg><use href="#o-spot"/></svg></button><button class="t"><svg><use href="#o-ring"/></svg></button><button class="t"><svg><use href="#o-spot"/></svg></button><button class="t"><svg><use href="#o-ring"/></svg></button><button class="t"><svg><use href="#o-ring"/></svg></button>
    </div>
    <div class="bar">
      <button class="t"><svg><use href="#v-bool"/></svg></button><button class="t"><svg><use href="#v-boold"/></svg></button><i></i><button class="t"><svg><use href="#v-uv"/></svg></button><button class="t"><svg><use href="#v-cubec"/></svg></button><button class="t"><svg><use href="#v-cubec"/></svg></button><button class="t"><svg><use href="#v-ball"/></svg></button><button class="t"><svg><use href="#v-ball2"/></svg></button><i></i><button class="t"><svg><use href="#v-pick"/></svg></button>
    </div>
    <div class="bar">
      <button class="t"><svg><use href="#v-ray"/></svg></button><button class="t"><svg><use href="#v-palette"/></svg></button><i></i><button class="t"><svg><use href="#v-pot"/></svg></button><button class="t"><svg><use href="#v-potp"/></svg></button><button class="t"><svg><use href="#v-cloud"/></svg></button><button class="t"><svg><use href="#v-refresh"/></svg></button><i></i><button class="t"><svg><use href="#v-stand"/></svg></button><button class="t"><svg><use href="#v-standg"/></svg></button><i></i><button class="t"><svg><use href="#v-window"/></svg></button><button class="t"><svg><use href="#v-winpot"/></svg></button><button class="t"><svg><use href="#v-wing"/></svg></button><button class="t"><svg><use href="#v-lock"/></svg></button>
    </div>
  </div>
</div>

<div class="work">
  <aside class="side">
    <div class="toolset">
      <button class="t on"><svg><use href="#select"/></svg></button><button class="t"><svg><use href="#component"/></svg></button>
      <button class="t"><svg><use href="#bucket"/></svg></button><button class="t"><svg><use href="#eraser"/></svg></button>
      <hr>
      <button class="t"><svg><use href="#pencil"/></svg></button><button class="t"><svg><use href="#freehand"/></svg></button>
      <button class="t"><svg><use href="#rect"/></svg></button><button class="t"><svg><use href="#rectrot"/></svg></button>
      <button class="t"><svg><use href="#circle"/></svg></button><button class="t"><svg><use href="#polygon"/></svg></button>
      <button class="t"><svg><use href="#arc2"/></svg></button><button class="t"><svg><use href="#arc"/></svg></button>
      <button class="t"><svg><use href="#arc3"/></svg></button><button class="t"><svg><use href="#pie"/></svg></button>
      <hr>
      <button class="t"><svg><use href="#move"/></svg></button><button class="t"><svg><use href="#push"/></svg></button>
      <button class="t"><svg><use href="#rotate"/></svg></button><button class="t"><svg><use href="#follow"/></svg></button>
      <button class="t"><svg><use href="#scale"/></svg></button><button class="t"><svg><use href="#offset"/></svg></button>
      <hr>
      <button class="t"><svg><use href="#tape"/></svg></button><button class="t"><svg><use href="#dim"/></svg></button>
      <button class="t"><svg><use href="#protractor"/></svg></button><button class="t"><svg><use href="#text"/></svg></button>
      <button class="t"><svg><use href="#axes"/></svg></button><button class="t"><svg><use href="#text3d"/></svg></button>
      <hr>
      <button class="t"><svg><use href="#orbit"/></svg></button><button class="t"><svg><use href="#pan"/></svg></button>
      <button class="t"><svg><use href="#zoom"/></svg></button><button class="t"><svg><use href="#zoomwin"/></svg></button>
      <button class="t"><svg><use href="#extents"/></svg></button><button class="t"><svg><use href="#previous"/></svg></button>
      <hr>
      <button class="t"><svg><use href="#camera"/></svg></button><button class="t"><svg><use href="#look"/></svg></button>
      <button class="t"><svg><use href="#walk"/></svg></button><button class="t"><svg><use href="#section"/></svg></button>
      <hr>
      <button class="t"><svg><use href="#warehouse"/></svg></button><button class="t"><svg><use href="#extwh"/></svg></button>
      <button class="t"><svg><use href="#layout"/></svg></button><button class="t"><svg><use href="#ruby"/></svg></button>
    </div>
  </aside>

  <div class="doc">
    <div class="scenes"><button class="on">Scene 1</button><button>Scene 3</button><button>Scene 2</button></div>
    <div class="split">
      <main class="viewport">
        <svg class="model" viewBox="53 156 2224 1209" preserveAspectRatio="xMinYMin slice">
          <path d="M53 156H304L938 801 1253 1243 1338 1365H53z" fill="#656565"/>
          <path d="M304 156H1339L1257 576 1252 599 948 813 938 801z" fill="#929292"/>
          <path d="M1339 156H1626L1570 264 1588 281 1659 156H1740L1643 304 1622 337 1606 348 1577 322 1265 539z" fill="#929292"/>
          <path d="M1626 156H1659L1588 281 1570 264zM1672 156H1729L1626 315 1606 348 1577 322 1596 288zM1740 156H2278V857L2251 863 1984 619 1943 638 1622 337 1643 304z" fill="#888"/>
          <path d="M1279 462 1570 264 1588 281 1272 499z" fill="#fff"/>
          <path d="M2251 863 2278 858V883L2268 884 2258 878z" fill="#888"/>
          <path d="M1943 638 1984 619 1253 1243 1248 1231z" fill="#656565"/>
          <path d="M938 801 948 813 1248 1231 1253 1243z" fill="#656565"/>
          <g class="edge thin"><path d="M304 156 938 801M1659 156 1588 281M1729 156 1626 315M1570 264 1588 281 1272 499M1984 619 1253 1243M2262 869 2278 866M2264 876 2278 873"/></g>
          <g class="edge"><path d="M1339 156 1279 462 1257 576 938 801 1251 1243 1338 1365M1279 462 1570 264 1626 156M1269 515 1596 288 1672 156M1596 288 1626 315 1643 304 1740 156M1643 304 1760 412 1984 619 2251 863 2264 876 2258 878 2268 884 2278 883M2251 863 2278 858"/></g>
          <g class="edge picked"><path d="M1257 576 1252 599 948 813 1248 1231 1943 638 1984 619M1265 539 1577 322 1606 348 1622 337 1943 638M1577 322 1596 288M1606 348 1626 315M1622 337 1643 304M1943 638 1984 619"/></g>
        </svg>
        <section class="measure">
          <header><b>Measurements</b><button aria-label="Close">x</button></header>
          <label>Measurements <input type="text"></label>
        </section>
        <p class="keycast">LButton</p>
      </main>

      <aside class="tray">
        <header class="trayhead"><span>Default Tray</span><svg class="i14"><use href="#pin"/></svg><button class="x" aria-label="Close tray">x</button></header>

        <h2 class="open"><span>Entity Info</span><button aria-label="Close">×</button></h2>
        <section class="entity">
          <h3>Solid Group (1 in model)</h3>
          <div class="entitybody">
            <div class="faces"></div>
            <div class="form">
              <label for="etag">Tag:</label><select id="etag"><option>Untagged</option></select>
              <label for="einst">Instance:</label><input id="einst" type="text">
              <label for="etype" class="gap">Type:</label><select id="etype" class="gap"><option>Type: &lt;undefined&gt;</option></select>
              <label for="evol" class="gap">Volume:</label><input id="evol" class="gap ro" type="text" value="13.32 m³" readonly>
              <span class="gap">Toggles:</span>
              <div class="toggles"><button><svg><use href="#eye"/></svg></button><button class="off"><svg><use href="#unlock"/></svg></button><button><svg><use href="#recv"/></svg></button><button><svg><use href="#shadow"/></svg></button></div>
            </div>
          </div>
        </section>

        <h2><span>Components</span><button aria-label="Close">×</button></h2>
        <h2 class="open"><span>Tags</span><button aria-label="Close">×</button></h2>
        <section class="tags">
          <div class="tagtools"><button aria-label="Add tag"><svg class="i16"><use href="#plus"/></svg></button><button aria-label="Remove tag"><svg class="i16"><use href="#minus"/></svg></button><button class="end" aria-label="Details"><svg class="i14"><use href="#details"/></svg></button></div>
          <div class="taggrid">
          <table>
            <colgroup><col class="c1"><col class="c2"><col class="c1"><col class="c3"><col class="c1"><col></colgroup>
            <thead><tr><th></th><th>Name <span class="sort">▽</span></th><th></th><th>Dashes</th><th></th><th></th></tr></thead>
            <tbody>
              <tr><td><svg class="i14"><use href="#eye"/></svg></td><td>Untagged</td><td><span class="chip c-a"></span></td><td>Default</td><td><svg class="i14"><use href="#pencil"/></svg></td><td></td></tr>
              <tr><td><svg class="i14"><use href="#eye"/></svg></td><td>문</td><td><span class="chip c-b"></span></td><td>Default</td><td></td><td></td></tr>
              <tr><td><svg class="i14"><use href="#eye"/></svg></td><td>문틀</td><td><span class="chip c-c"></span></td><td>Default</td><td></td><td></td></tr>
              <tr><td><svg class="i14"><use href="#eye"/></svg></td><td>바닥</td><td><span class="chip c-d"></span></td><td>Default</td><td></td><td></td></tr>
            </tbody>
          </table>
          </div>
          <div class="grip"></div>
        </section>

        <h2><span>Shadows</span><button aria-label="Close">×</button></h2>
        <h2><span>Styles</span><button aria-label="Close">×</button></h2>
        <h2 class="open"><span>Materials</span><button aria-label="Close">×</button></h2>
        <section class="materials">
          <div class="mathead">
            <div class="preview"></div>
            <input type="text" value="Material1" aria-label="Material name">
            <div class="matbtns"><button><svg class="i16"><use href="#secondary"/></svg></button><button><svg class="i20"><use href="#cratebadge"/></svg></button><div class="tri"></div></div>
          </div>
          <div class="tabs"><button>Select</button><button class="on">Edit</button><svg class="i16"><use href="#dropper"/></svg></div>
          <div class="edit">
            <h3>Color</h3>
            <div class="picker"><label for="pick">Picker:</label><select id="pick"><option>HSB</option></select><span class="solid"></span><svg class="i18"><use href="#crate"/></svg><svg class="i18"><use href="#monitor"/></svg></div>
            <div class="hsb"><label for="h">H</label><input class="range hue" type="range" value="10" aria-label="Hue"><span class="spin"><input id="h" type="text" value="40"><button>▲</button><button>▼</button></span></div>
            <div class="hsb"><label for="s">S</label><input class="range sat" type="range" value="0" aria-label="Saturation"><span class="spin"><input id="s" type="text" value="0"><button>▲</button><button>▼</button></span></div>
            <div class="hsb"><label for="b">B</label><input class="range bri" type="range" value="24" aria-label="Brightness"><span class="spin"><input id="b" type="text" value="24"><button>▲</button><button>▼</button></span></div>
            <h3 class="tex">Texture</h3>
            <label class="check"><input type="checkbox">Use texture image</label>
            <div class="file"><input type="text" aria-label="Texture file"><svg class="i18"><use href="#folder"/></svg><svg class="i18"><use href="#edittex"/></svg></div>
            <div class="size">
              <div class="dims">
                <svg class="i14"><use href="#harrow"/></svg><input type="text" value="~ 305 mm" disabled aria-label="Texture width">
                <svg class="i14"><use href="#varrow"/></svg><input type="text" value="~ 305 mm" disabled aria-label="Texture height">
              </div>
              <svg class="brace" viewBox="0 0 22 32"><path d="M1 1c9 0 2 14 9 15-7 1 0 15-9 15" fill="none" stroke="#888" stroke-width="1.500"/><path d="M16 6h4v8h-4zM16 18h4v8h-4zM18 11v10" fill="none" stroke="#888" stroke-width="2"/></svg>
              <div class="recolor"><label class="check dim"><input type="checkbox" disabled>Colorize</label><label class="reset"><button aria-label="Reset Color"></button>Reset Color</label></div>
            </div>
            <h3>Opacity</h3>
            <div class="hsb op"><input class="range opa" type="range" value="100" aria-label="Opacity"><span class="spin"><input type="text" value="100" aria-label="Opacity value"><button>▲</button><button>▼</button></span></div>
          </div>
          <div class="rule"></div>
          <div class="sub">Select</div>
          <div class="nav"><button><svg class="i16"><use href="#prev"/></svg></button><button><svg class="i16"><use href="#next"/></svg></button><button><svg class="i18"><use href="#home"/></svg></button><select aria-label="Library"><option></option></select><button><svg class="i14"><use href="#details"/></svg></button></div>
          <div class="swatches"></div>
          <div class="grip"></div>
        </section>
        <h2><span>Soften Edges</span><button aria-label="Close">×</button></h2>
        <h2><span>Scenes</span><button aria-label="Close">×</button></h2>
        <div class="rest"></div>
      </aside>
    </div>
  </div>
</div>
</body>
</html>
```
FILE: styles.css
```css
* { box-sizing: border-box; }
body {
  margin: 0;
  min-height: 100vh;
  display: flex;
  flex-direction: column;
  background: #f0f0f0;
  color: #000;
  font: 11px/16px "DejaVu Sans Condensed", "Noto Sans CJK KR", sans-serif;
  border-right: 1px solid #3a3a32;
}
button, input, select { font: inherit; color: inherit; margin: 0; padding: 0; border: 0; border-radius: 0; background: none; }
svg { display: block; flex: none; }
h2, h3, p, ul { margin: 0; padding: 0; font-size: inherit; list-style: none; }
.defs { position: absolute; width: 0; height: 0; }
.l { fill: none; stroke: #222; }
.r { fill: none; stroke: #e8303a; stroke-width: 1.2; }
.rf { fill: #e31b23; }
.w { fill: #fff; stroke: #222; }
.g { fill: #8f8d79; stroke: #333; }
.gd { fill: #6d6b5a; stroke: #222; }
.v { fill: none; stroke: #555; stroke-width: 1.4; }
.o { fill: none; stroke: #c87a3c; stroke-width: 1.6; }
.i14 { width: 14px; height: 14px; }
.i16 { width: 16px; height: 16px; }
.i18 { width: 18px; height: 18px; }
.i20 { width: 20px; height: 20px; }

/* title and menu */
.titlebar {
  display: flex;
  height: 19px;
  background: #3a3a3a;
  color: #fff;
  font: 12px/16px "Noto Sans", "Noto Sans CJK KR", sans-serif;
}
.logo { width: 14px; height: 14px; margin-right: 6px; }
.caption { flex: 1; }
.winbtn { width: 46px; height: 12px; display: grid; place-items: center; }
.winbtn:last-child { width: 44px; margin-right: 2px; }
.winbtn svg { width: 10px; height: 10px; fill: none; stroke: #fff; }
.menubar {
  display: flex;
  gap: 15px;
  height: 18px;
  padding-left: 3px;
  background: #fff;
  font: 11px/18px "Noto Sans", sans-serif;
}

/* toolbars */
.docks { padding-top: 2px; }
.dock { display: flex; height: 30px; }
.bar {
  display: flex;
  align-items: center;
  padding: 0 1px 0 10px;
  border-right: 1px solid #aaa;
  border-bottom: 1px solid #b4b4b4;
  border-top: 1px solid #fafafa;
  background:
    repeating-linear-gradient(#bbb 0 2px, transparent 2px 4px) 5px 2px / 2px 24px no-repeat,
    #f2f2f2;
}
.bar.first { padding-left: 6px; background-position: 0 2px, 0 0; }
.bar.apart { margin-left: 330px; }
.bar > i { width: 8px; height: 22px; background: linear-gradient(#888, #888) 3px 0 / 1px 100% no-repeat; }
.t { width: 26px; height: 25px; display: grid; place-items: center; border: 1px solid transparent; }
.t svg { width: 18px; height: 18px; }
.big .t svg, .dock:nth-child(3) .t svg { width: 21px; height: 21px; }
.t.on { background: #c3def5; border-color: #90c4f0; }
.more { width: 13px; height: 25px; display: grid; place-items: center; }
.more::after { content: ""; border: 3px solid transparent; border-top-color: #000; border-bottom: 0; }

.shadows { width: 345px; }
.daterange { width: 138px; margin-left: 8px; padding-top: 2px; }
.daterange + .daterange { margin-left: 17px; }
.ticks { display: flex; justify-content: space-between; padding: 0 4px; font: 10px/12px "Liberation Sans", sans-serif; }
.daterange + .daterange .ticks { padding: 0; }

.range { appearance: none; display: block; width: 100%; height: 10px; border: 1px solid; border-color: #777 #fff #fff #777; }
.range::-webkit-slider-thumb { appearance: none; width: 5px; height: 18px; background: #f0f0f0; border: 1px solid; border-color: #fff #999 #999 #fff; }
.month { background: linear-gradient(90deg, #fff, #f6b40a 30%, #f00 68%, #ffc0c0 88%, #fff0f0); }
.time { background: linear-gradient(90deg, #fff, #7aa0c4 30%, #5a6cf5 68%, #222a50 88%, #111); }

.tagbar { width: 143px; padding-left: 14px; }
.tagcombo { position: relative; display: flex; align-items: center; width: 126px; height: 22px; border: 1px solid #0078d7; background: #fff; font: 11px/16px "Noto Sans", "Noto Sans CJK KR", sans-serif; }
.tiny { width: 9px; height: 9px; }
.tagcombo > .tiny { margin: 0 10px 0 5px; }
.tagcombo input { width: 85px; height: 16px; padding-left: 1px; background: #ffffd0; }
.tagcombo > button { width: 14px; height: 20px; margin-left: auto; background: #c3def5; border: 1px solid #0078d7; display: grid; place-items: center; }
.tagcombo > button svg { width: 8px; height: 8px; fill: none; stroke: #333; }
.taglist { position: absolute; z-index: 2; top: 22px; left: -1px; width: 128px; border: 1px solid #0078d7; background: #fff; box-shadow: 3px 3px 3px #8888; }
.taglist li { display: flex; align-items: center; justify-content: flex-end; height: 16px; }
.taglist .tiny { margin-right: 3px; }
.taglist span { width: 111px; height: 16px; padding-left: 1px; background: #ffffd0; }
.taglist .on span { background: #0078d7; color: #fff; outline: 1px dotted #e59a4c; outline-offset: -1px; }
.halo { position: absolute; z-index: 3; left: 71px; top: 60px; width: 24px; height: 24px; border-radius: 50%; background: #ffff00a0; }
.pointer { position: absolute; z-index: 4; left: 83px; top: 72px; width: 12px; height: 19px; }

/* left tools */
.work { flex: 1; display: flex; }
.side { width: 53px; padding-top: 31px; }
.toolset {
  display: grid;
  grid-template-columns: 23px 27px;
  width: 52px;
  padding: 11px 0 2px;
  border-right: 1px solid #aaa;
  border-bottom: 1px solid #aaa;
  background: repeating-linear-gradient(90deg, #bbb 0 2px, transparent 2px 4px) 1px 5px / 48px 2px no-repeat, #f2f2f2;
}
.toolset .t { width: auto; height: 26px; }
.toolset hr { grid-column: 1 / 3; width: 48px; height: 1px; margin: 3px 0 4px; border: 0; background: #888; }

/* document */
.doc { flex: 1; min-width: 0; display: flex; flex-direction: column; }
.scenes {
  display: flex;
  align-items: flex-end;
  height: 25px;
  border-bottom: 4px solid #fff;
  font: 13px/14px "Noto Sans", sans-serif;
}
.scenes button { width: 57px; height: 18px; padding-bottom: 3px; border: 1px solid #ddd; border-bottom: 0; }
.scenes .on { width: 60px; height: 20px; padding-bottom: 4px; background: #fff; }
.split { flex: 1; display: flex; }
.viewport { position: relative; flex: 1; min-width: 0; overflow: hidden; background: #fff; border-top: 2px solid #6a6a6a; }
.model { position: absolute; inset: 0; width: 100%; height: 100%; }
.edge { fill: none; stroke: #000; stroke-width: 1.8; }
.edge.thin { stroke-width: 1; }
.edge.picked { stroke: #00f; stroke-width: 1; }
.measure { position: absolute; left: 1707px; top: 836px; width: 294px; height: 58px; border: 2px solid; border-color: #eee #666 #666 #eee; background: #f0f0f0; font: 11px/24px "Noto Sans", sans-serif; }
.measure header { display: flex; align-items: center; height: 25px; padding: 0 4px 0 3px; background: linear-gradient(#97b3d0, #a6c2e0); }
.measure header b { flex: 1; }
.measure button, .x { width: 12px; height: 13px; background: #c75050; color: #fff; font: bold 10px/10px "Noto Sans", sans-serif; }
.measure label { display: flex; align-items: center; height: 29px; padding: 0 4px 0 7px; border: 1px solid #b4cbe6; border-top: 0; }
.measure input { flex: 1; min-width: 0; height: 16px; margin-left: 48px; background: #eee; }
.keycast { position: absolute; left: 1692px; top: 899px; font: 27px/32px "Liberation Sans", sans-serif; }

/* tray */
.tray { display: flex; flex-direction: column; width: 279px; padding-left: 5px; border-left: 1px solid #fff; }
.trayhead { display: flex; align-items: center; height: 19px; padding: 0 4px; background: linear-gradient(#bccada, #d3e0ee); }
.trayhead span { flex: 1; }
.trayhead .x { margin-left: 8px; }
.tray h2 {
  display: flex;
  align-items: center;
  height: 18px;
  margin-top: 1px;
  padding: 0 3px 0 9px;
  background: linear-gradient(#eee, #b8b8b8);
  border-top: 1px solid #aaa;
  font: 12px/16px "DejaVu Sans Condensed", sans-serif;
}
.tray h2::before { content: ""; width: 6px; height: 6px; margin-right: 7px; background: #000; clip-path: polygon(0 0, 100% 50%, 0 100%); }
.tray h2.open::before { clip-path: polygon(0 0, 100% 0, 50% 100%); }
.tray h2 span { flex: 1; }
.tray h2 button { width: 13px; height: 13px; border: 1px solid #999; background: #e4e4e4; font: bold 10px/10px "Noto Sans", sans-serif; }
.tray select {
  appearance: none;
  height: 21px;
  padding-left: 3px;
  border: 1px solid #adadad;
  background: #e1e1e1 url("data:image/svg+xml,%3Csvg xmlns='http://www.w3.org/2000/svg' width='10' height='6'%3E%3Cpath d='M1 1l4 4 4-4' fill='none' stroke='%23444'/%3E%3C/svg%3E") right 4px center no-repeat;
}
.tray input[type="text"] { height: 21px; padding-left: 3px; border: 1px solid #7a7a7a; background: #fff; min-width: 0; }

.entity { height: 177px; }
.entity h3 { margin-left: 4px; padding: 5px 5px 6px; border-bottom: 1px solid #a0a0a0; font: bold 11px/16px "Noto Sans", sans-serif; }
.entitybody { display: flex; justify-content: space-between; padding: 7px 7px 0 12px; }
.faces { width: 45px; height: 49px; border: 1px solid #999; background: linear-gradient(45deg, #a5b4be 50%, #fff 50%); }
.form { display: grid; grid-template-columns: auto 140px; column-gap: 2px; align-items: center; text-align: right; }
.form .gap { margin-top: 4px; }
.form select.gap { border-width: 2px; background-color: #e6e6e6; }
.form input.ro { background: #f0f0f0; }
.toggles { display: flex; gap: 3px; margin-top: 4px; }
.toggles button { width: 21px; height: 23px; display: grid; place-items: center; border: 1px solid; border-color: #aaa #fff #fff #aaa; }
.toggles .off { border-color: transparent; }
.toggles svg { width: 15px; height: 15px; }

.tagtools { display: flex; align-items: center; gap: 8px; height: 27px; padding: 0 5px 0 6px; }
.tagtools .end { margin-left: auto; }
.taggrid { height: 182px; background: #fff; }
.tags table { width: 100%; table-layout: fixed; border-collapse: collapse; }
.c1 { width: 24px; }
.c2 { width: 104px; }
.c3 { width: 95px; }
.tags th { height: 25px; padding: 0 0 0 5px; border-right: 1px solid #ddd; text-align: left; font-weight: normal; }
.tags th:last-child { border: 0; padding: 0; }
.tags td { height: 19px; padding: 0 0 0 2px; white-space: nowrap; }
.tags td:nth-child(4) { padding-left: 0; }
.sort { margin-left: 8px; padding: 0 3px; background: #f0f0f0; color: #999; font-size: 9px; }
.chip { display: block; width: 17px; height: 17px; }
.c-a { background: #ff5555; }
.c-b { background: #aa4400; }
.c-c { background: #cc4400; }
.c-d { background: #cc6600; }
.grip { height: 5px; margin-top: 1px; border: 1px solid #b0b0b0; }

.mathead { display: flex; align-items: flex-start; height: 76px; padding: 2px 2px 0; border-bottom: 1px solid #a0a0a0; }
.preview { width: 66px; height: 71px; margin-right: 3px; border: 1px solid #999; background: linear-gradient(#404040, #404040) center / 64px 64px no-repeat; }
.mathead input { width: 174px; }
.matbtns { flex: 1; display: flex; flex-direction: column; align-items: center; gap: 6px; padding-top: 2px; }
.tri { width: 22px; height: 22px; background: linear-gradient(45deg, #a5b4be 50%, #fff 50%); }
.tabs { display: flex; align-items: flex-end; height: 27px; padding-left: 1px; border-bottom: 1px solid #ddd; }
.tabs button { width: 40px; height: 19px; border: 1px solid #ddd; border-bottom: 0; }
.tabs .on { width: 46px; height: 21px; background: #fff; padding: 0 12px 2px 0; }
.tabs svg { margin: 0 6px 6px auto; }
.edit { height: 307px; padding: 2px 59px 0 9px; border-left: 3px solid #fff; border-bottom: 1px solid #fff; overflow: hidden; }
.edit h3 { height: 17px; border-bottom: 1px solid #a0a0a0; font: bold 11px/16px "DejaVu Sans Condensed", sans-serif; }
.edit h3.tex { margin-top: 5px; }
.picker { display: flex; align-items: center; height: 32px; padding-left: 8px; margin-right: -6px; gap: 4px; }
.picker select { width: 87px; }
.picker svg:last-child { margin-left: 4px; }
.solid { width: 24px; height: 26px; margin: 0 5px 0 -3px; border: 1px solid #999; background: #404040; }
.hsb { display: flex; align-items: center; height: 28px; padding-left: 2px; }
.hsb .range { width: 131px; height: 17px; }
.hsb .range::-webkit-slider-thumb { height: 25px; }
.hsb > label { width: 14px; }
.spin { display: grid; grid-template-columns: 32px 16px; width: 48px; height: 21px; margin-left: auto; border: 1px solid #7a7a7a; background: #fff; }
.hsb .spin input { grid-row: 1 / 3; height: 18px; border: 0; }
.spin button { height: 9px; width: 14px; border: 1px solid #aaa; background: #f0f0f0; font-size: 5px; line-height: 6px; }
.hue { background: #404040; }
.sat { background: linear-gradient(90deg, #404040, #402900); }
.bri { background: linear-gradient(90deg, #000, #fff); }
.opa { background: linear-gradient(90deg, #fff, #404040); }
.hsb .opa { width: 145px; }
.check { display: flex; align-items: center; gap: 3px; }
.check input { appearance: none; width: 13px; height: 13px; border: 1px solid #333; background: #fff; }
.edit > .check { height: 24px; }
.dim { color: #777; }
.dim input { border-color: #ccc; }
.file { display: flex; align-items: center; gap: 5px; height: 24px; }
.file input { width: 156px; }
.size { display: flex; margin: 4px -10px 2px 0; height: 54px; }
.dims { display: grid; grid-template-columns: 14px 55px; gap: 4px 7px; align-items: center; }
.edit .dims input { height: 23px; padding: 0; border-color: #ccc; background: #f0f0f0; color: #777; text-align: center; }
.brace { width: 22px; height: 32px; margin: 10px 8px 0 6px; }
.recolor { display: flex; flex-direction: column; gap: 7px; }
.recolor .check { padding: 4px 0 0 10px; }
.reset { display: flex; align-items: center; gap: 3px; white-space: nowrap; }
.reset button { width: 24px; height: 26px; border: 1px solid #999; }
.rule { height: 7px; border-bottom: 1px solid #999; border-top: 1px solid #bbb; }
.sub { height: 19px; padding: 1px 3px 0; border-bottom: 1px solid #999; background: #e2e2e2; }
.nav { display: flex; align-items: center; height: 30px; padding: 0 5px 0 6px; gap: 6px; border-bottom: 1px solid #999; }
.nav button + button { margin-left: 2px; }
.nav select { flex: 1; height: 24px; background-color: #fff; border-color: #7a7a7a; }
.swatches { height: 109px; background: #fff; }
.rest { flex: 1; background: #f4f7fc; }
```
